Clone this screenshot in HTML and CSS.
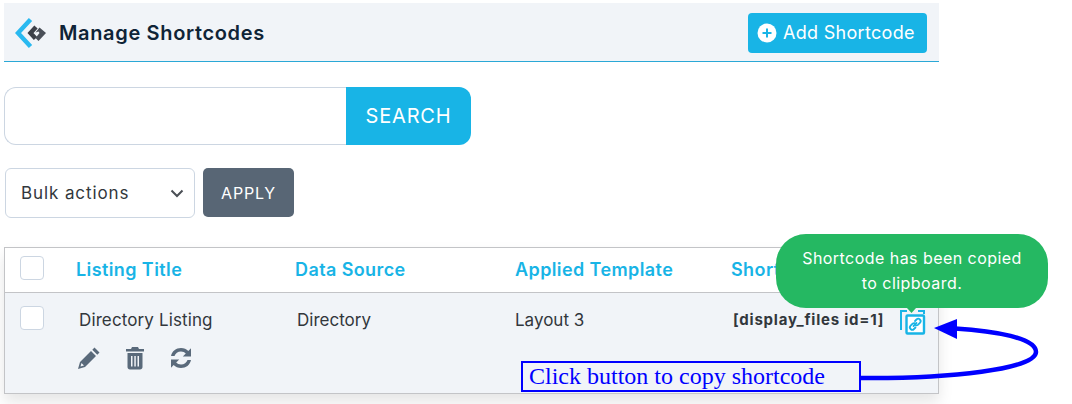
FILE: index.html
```html
<!DOCTYPE html>
<html lang="en">
<head>
<meta charset="utf-8">
<title>Manage Shortcodes</title>
<link rel="stylesheet" href="styles.css">
</head>
<body>
<div class="page">
  <header class="topbar">
    <div class="brand">
      <svg class="logo" width="32" height="32" viewBox="0 0 32 32">
        <path d="M15.500 2.500L3 16L15.500 29.500" fill="none" stroke="#29b9f0" stroke-width="4.500"/>
        <path d="M21 10L15.500 16L20.500 21.500" fill="none" stroke="#3c4048" stroke-width="4.500"/>
        <path d="M20.500 15.500L24.500 10.500L31 16L23.500 24L20.500 21L24.500 16L23.500 14.500Z" fill="#4a4f58"/>
      </svg>
      <h1 class="title">Manage Shortcodes</h1>
    </div>
    <button class="add-btn">
      <svg width="20" height="20" viewBox="0 0 20 20"><circle cx="10" cy="10" r="9.500" fill="#fff"/><path d="M10 5.500v9M5.500 10h9" stroke="#18b4e6" stroke-width="2"/></svg>
      <span>Add Shortcode</span>
    </button>
  </header>

  <form class="search">
    <div class="search-input"></div>
    <div class="search-btn">SEARCH</div>
  </form>

  <div class="bulk">
    <div class="select">
      <span>Bulk actions</span>
      <svg width="14" height="9" viewBox="0 0 14 9"><path d="M1.500 1.500L7 7l5.500-5.500" fill="none" stroke="#4a4f55" stroke-width="2"/></svg>
    </div>
    <div class="apply">APPLY</div>
  </div>

  <div class="table">
    <div class="row head">
      <div class="c0"><span class="check"></span></div>
      <div class="c1">Listing Title</div>
      <div class="c2">Data Source</div>
      <div class="c3">Applied Template</div>
      <div class="c4">Shortcode</div>
    </div>
    <div class="row body">
      <div class="c0"><span class="check"></span></div>
      <div class="c1 cell">
        <div>Directory Listing</div>
        <div class="actions">
          <svg width="24" height="24" viewBox="0 0 24 24"><path fill="#5a6a7b" d="M17.500 1.500l5 5-2.200 2.200-5-5zM14 5l5 5L8 21l-7 2 2-7zM4.500 17l-1 3.500 3.500-1z"/></svg>
          <svg width="20" height="24" viewBox="0 0 20 24"><path fill="#5a6a7b" fill-rule="evenodd" d="M7 1h6l1 2h5v2.500H1V3h5zM2.500 7h15v14c0 1.500-1 2.500-2.500 2.500H5c-1.500 0-2.500-1-2.500-2.500zM6 10v10.500h1.500V10zM9.300 10v10.500h1.500V10zM12.500 10v10.500H14V10z"/></svg>
          <svg width="24" height="24" viewBox="0 0 24 24"><path fill="#5a6a7b" d="M2 10C3 5 7 2 12 2c3 0 5.500 1.200 7.300 3L22 2.300V10.500h-8.200l3-3C15.700 6.300 14 5.500 12 5.500c-3.200 0-5.600 1.800-6.500 4.500zM22 14c-1 5-5 8-10 8-3 0-5.500-1.200-7.300-3L2 21.700V13.500h8.200l-3 3c1.100 1.200 2.800 2 4.800 2 3.200 0 5.600-1.800 6.500-4.500z"/></svg>
        </div>
      </div>
      <div class="c2 cell">Directory</div>
      <div class="c3 cell">Layout 3</div>
      <div class="c4 cell code">[display_files id=1]</div>
    </div>
  </div>
</div>

<svg class="copy-icon" width="30" height="30" viewBox="0 0 30 30">
  <path d="M9 3H3v19" fill="none" stroke="#18b4e6" stroke-width="2"/>
  <path d="M20 3h6v3" fill="none" stroke="#18b4e6" stroke-width="2"/>
  <rect x="8.500" y="7.500" width="17.500" height="18" rx="1" fill="#fff" stroke="#18b4e6" stroke-width="2.400"/>
  <g fill="none" stroke="#18b4e6" stroke-width="1.800" stroke-linecap="round">
    <path d="M15.500 18l3-3"/>
    <path d="M17 13l1.500-1.500a2.400 2.400 0 0 1 3.400 3.400l-2 2a2.400 2.400 0 0 1-2 .5"/>
    <path d="M17.500 19.500L16 21a2.400 2.400 0 0 1-3.400-3.400l2-2a2.400 2.400 0 0 1 2-.5"/>
  </g>
  <path d="M9 0h9l-4.500 5z" fill="#25b862"/>
</svg>

<div class="tooltip">Shortcode has been copied to clipboard.</div>

<svg class="curve" width="190" height="70" viewBox="850 315 190 70">
  <path d="M858 378C950 379 1036 369 1036 352C1036 338 995 331 955 328.500" fill="none" stroke="#0000ff" stroke-width="4.500"/>
  <path d="M934 328L957 319V339Z" fill="#0000ff"/>
</svg>
<div class="note">Click button to copy shortcode</div>
</body>
</html>
```

FILE: styles.css
```css
* { box-sizing: border-box; }
html, body { margin: 0; padding: 0; background: #fff; }
body { width: 1072px; height: 404px; overflow: hidden; position: relative; font-family: Inter, "Open Sans", sans-serif; color: #32373c; }
.page { width: 939px; padding: 3px 0 0 4px; }

.topbar { height: 59px; background: #f1f4f8; border-bottom: 1px solid #2ba8d6; display: flex; align-items: center; justify-content: space-between; padding: 0 12px 0 11px; }
.brand { display: flex; align-items: center; gap: 12px; }
.logo { margin-top: 1px; }
.title { margin: 2px 0 0; font-size: 20px; font-weight: 600; color: #0f2437; letter-spacing: .65px; }
.add-btn { width: 179px; height: 40px; margin-top: 1px; border: 0; border-radius: 4px; background: #18b4e6; color: #fff; font: 400 18px Inter, sans-serif; letter-spacing: .3px; display: flex; align-items: center; gap: 6px; padding: 0 0 0 9px; }

.search { display: flex; margin-top: 25px; width: 467px; height: 58px; }
.search-input { width: 342px; border: 1px solid #ccd6e2; border-right: 0; border-radius: 12px 0 0 12px; background: #fff; }
.search-btn { flex: 1; background: #18b4e6; color: #fff; border-radius: 0 12px 12px 0; display: flex; align-items: center; justify-content: center; font-size: 20px; letter-spacing: .8px; }

.bulk { display: flex; gap: 8px; margin: 23px 0 0 1px; align-items: flex-start; }
.select { width: 190px; height: 50px; border: 1px solid #ccd6e2; border-radius: 6px; display: flex; align-items: center; justify-content: space-between; padding: 0 10px 0 15px; font-size: 17px; letter-spacing: .9px; color: #32373c; }
.apply { width: 91px; height: 49px; background: #586675; color: #fff; border-radius: 5px; display: flex; align-items: center; justify-content: center; font-size: 16px; letter-spacing: .8px; }

.table { margin-top: 29px; width: 935px; height: 147px; border: 1px solid #c3c4c7; box-shadow: 0 8px 14px rgba(0,0,0,.1); background: #fff; }
.row { display: flex; }
.head { height: 45px; border-bottom: 1px solid #c3c4c7; align-items: center; padding-bottom: 2px; font-size: 18px; font-weight: 600; letter-spacing: .4px; color: #18b4e6; }
.body { height: 100px; background: #f1f4f8; font-size: 17px; padding-top: 16px; }
.c0 { width: 71px; padding-left: 15px; display: flex; }
.c1 { width: 219px; }
.c2 { width: 220px; }
.c3 { width: 216px; }
.c4 { flex: 1; }
.head .c0 { margin-top: -3px; }
.body .c0 { margin-top: -3px; }
.cell { padding-left: 2px; line-height: 22px; }
.c3.cell { padding-left: 0; }
.c1.cell { padding-left: 3px; letter-spacing: .12px; }
.code { font-size: 15px; font-weight: 700; letter-spacing: .78px; }
.check { width: 24px; height: 24px; border: 1px solid #ccd6e2; border-radius: 4px; background: #fff; display: block; }
.actions { display: flex; align-items: center; gap: 24px; margin: 15px 0 0 -2px; }

.tooltip { position: absolute; left: 776px; top: 234px; width: 272px; height: 74px; border-radius: 30px; background: #25b862; color: #fff; font-size: 16px; letter-spacing: .45px; line-height: 25px; padding: 12px 20px; text-align: center; }
.copy-icon { position: absolute; left: 898px; top: 308px; }
.curve { position: absolute; left: 850px; top: 315px; }
.note { position: absolute; left: 521px; top: 361px; width: 340px; height: 31px; border: 2px solid #0000ff; background: #f1f4f8; color: #0000ff; font: 24px/27px "Liberation Serif", serif; padding-left: 6px; white-space: nowrap; }
```
